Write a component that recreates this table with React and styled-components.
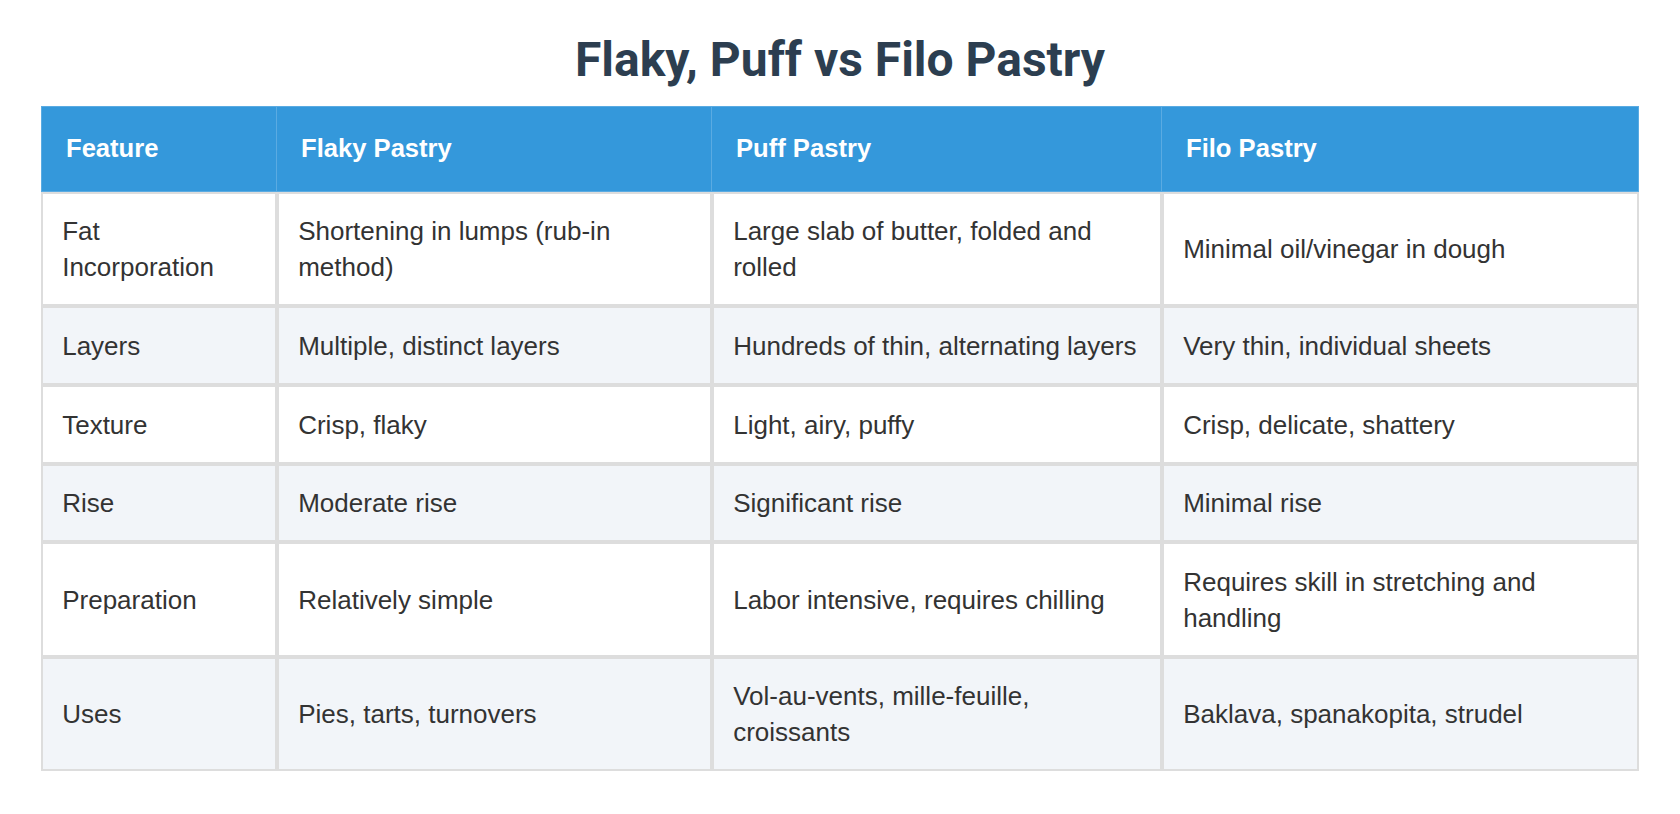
import React from "react";
import styled, { createGlobalStyle } from "styled-components";

const GlobalStyle = createGlobalStyle`
  html, body {
    margin: 0;
    padding: 0;
    background: #ffffff;
  }
  body {
    font-family: "Liberation Sans", Arial, sans-serif;
    color: #333333;
  }
`;

const Page = styled.div`
  padding: 32px 41px 40px;
`;

const Title = styled.h1`
  margin: 0 0 18px;
  text-align: center;
  font-family: Roboto, "Liberation Sans", sans-serif;
  font-weight: 700;
  font-size: 48px;
  line-height: 56px;
  color: #2c3e50;
`;

const Table = styled.table`
  width: 1598px;
  table-layout: fixed;
  border-collapse: separate;
  border-spacing: 0;
  line-height: 35.84px;
`;

const HeadCell = styled.th`
  background: #3498db;
  color: #ffffff;
  font-size: 25.6px;
  font-weight: 700;
  text-align: left;
  padding: 24px 24px;
  border: 1px solid #5aabe2;
  border-left-width: ${(p) => (p.$first ? "1px" : "0")};
  vertical-align: middle;
`;

const Row = styled.tr`
  background: ${(p) => (p.$alt ? "#f2f5f9" : "#ffffff")};
`;

const Cell = styled.td`
  padding: 20.6px 19.2px 18.2px;
  border: 2px solid #dddddd;
  font-size: 26px;
  vertical-align: middle;
  color: #333333;
`;

const columns = [
  { label: "Feature", width: 236 },
  { label: "Flaky Pastry", width: 435 },
  { label: "Puff Pastry", width: 450 },
  { label: "Filo Pastry", width: 477 },
];

const rows = [
  ["Fat Incorporation", "Shortening in lumps (rub-in method)", "Large slab of butter, folded and rolled", "Minimal oil/vinegar in dough"],
  ["Layers", "Multiple, distinct layers", "Hundreds of thin, alternating layers", "Very thin, individual sheets"],
  ["Texture", "Crisp, flaky", "Light, airy, puffy", "Crisp, delicate, shattery"],
  ["Rise", "Moderate rise", "Significant rise", "Minimal rise"],
  ["Preparation", "Relatively simple", "Labor intensive, requires chilling", "Requires skill in stretching and handling"],
  ["Uses", "Pies, tarts, turnovers", "Vol-au-vents, mille-feuille, croissants", "Baklava, spanakopita, strudel"],
];

export default function App() {
  return (
    <>
      <GlobalStyle />
      <Page>
        <Title>Flaky, Puff vs Filo Pastry</Title>
        <Table>
          <colgroup>
            {columns.map((c) => (
              <col key={c.label} style={{ width: c.width }} />
            ))}
          </colgroup>
          <thead>
            <tr>
              {columns.map((c, i) => (
                <HeadCell key={c.label} $first={i === 0}>
                  {c.label}
                </HeadCell>
              ))}
            </tr>
          </thead>
          <tbody>
            {rows.map((r, ri) => (
              <Row key={r[0]} $alt={ri % 2 === 1}>
                {r.map((v, ci) => (
                  <Cell key={ci}>{v}</Cell>
                ))}
              </Row>
            ))}
          </tbody>
        </Table>
      </Page>
    </>
  );
}
